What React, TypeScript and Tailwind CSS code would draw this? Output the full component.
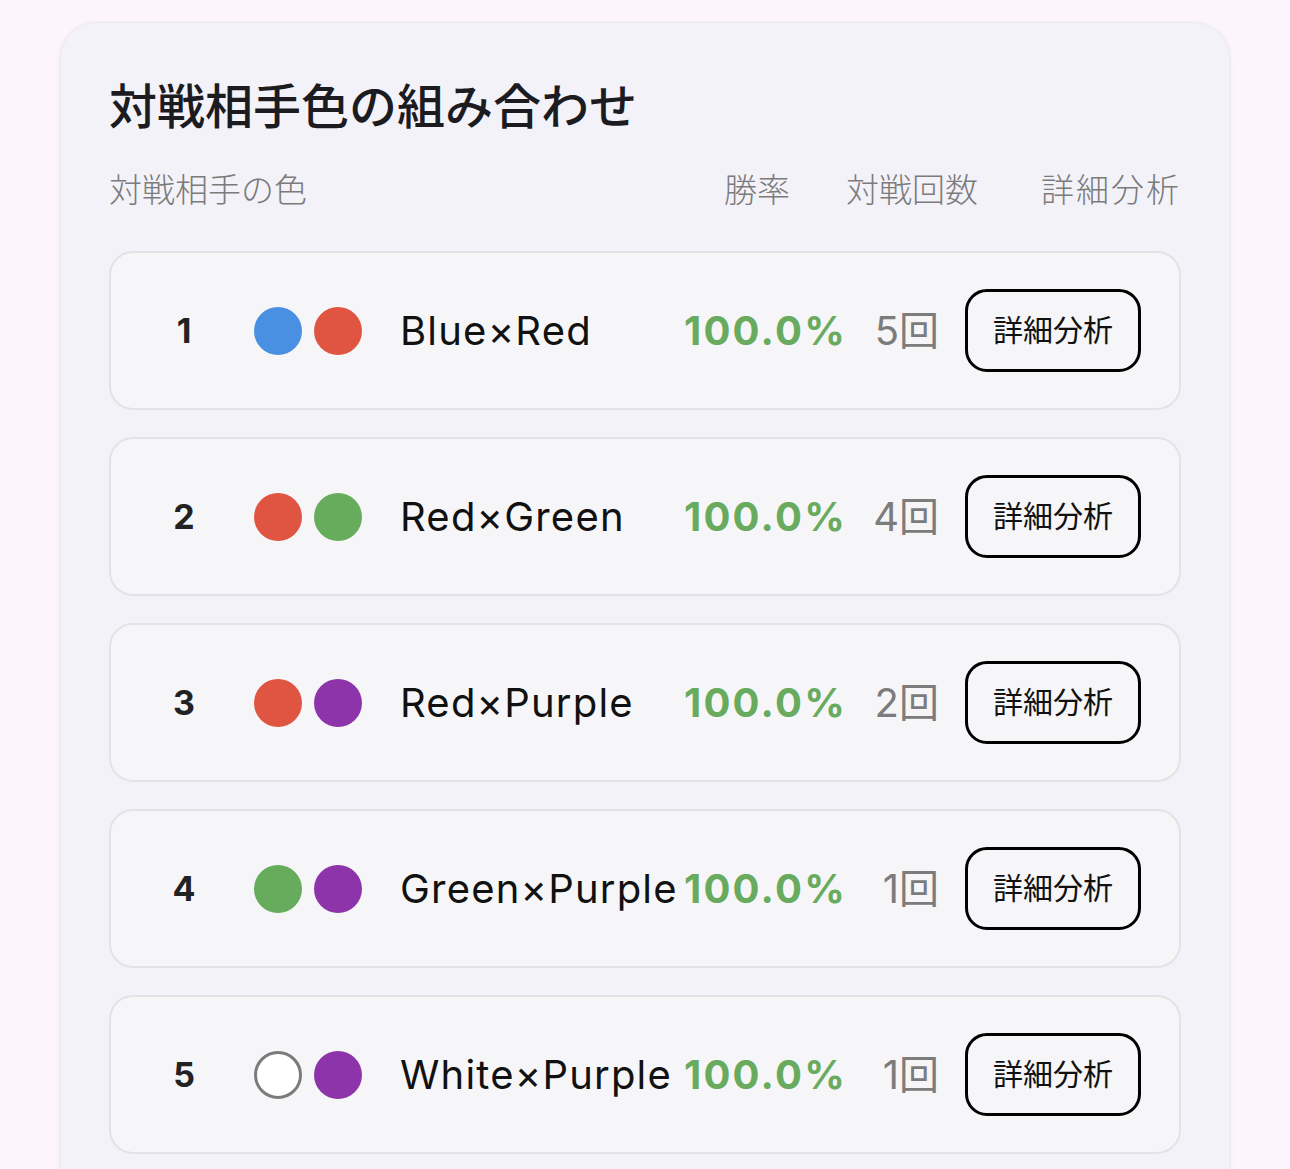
import React from 'react'

interface Matchup {
  rank: number
  colors: string[]
  name: string
  rate: string
  count: number
}

const DOT: Record<string, string> = {
  blue: 'bg-[#4a90e2]',
  red: 'bg-[#e05541]',
  green: 'bg-[#66ac5c]',
  purple: 'bg-[#8e34aa]',
  white: 'bg-white border-[3px] border-[#7b7b7b]',
}

const matchups: Matchup[] = [
  { rank: 1, colors: ['blue', 'red'], name: 'Blue×Red', rate: '100.0%', count: 5 },
  { rank: 2, colors: ['red', 'green'], name: 'Red×Green', rate: '100.0%', count: 4 },
  { rank: 3, colors: ['red', 'purple'], name: 'Red×Purple', rate: '100.0%', count: 2 },
  { rank: 4, colors: ['green', 'purple'], name: 'Green×Purple', rate: '100.0%', count: 1 },
  { rank: 5, colors: ['white', 'purple'], name: 'White×Purple', rate: '100.0%', count: 1 },
]

function Row({ m }: { m: Matchup }) {
  return (
    <div className="flex h-[159px] items-center rounded-[24px] border-2 border-[#e3e3e7] bg-[#f6f6f8] pl-[40px] pr-[38px]">
      <div className="w-[66px] text-center text-[34px] font-bold text-[#222]">{m.rank}</div>
      <div className="ml-[37px] flex gap-[12px]">
        {m.colors.map((c, i) => (
          <div key={i} className={`h-[48px] w-[48px] rounded-full ${DOT[c]}`} />
        ))}
      </div>
      <div className="ml-[38px] min-w-[280px] flex-1 whitespace-nowrap pr-[12px] text-[40px] tracking-[1.2px] text-[#111]">
        {m.name}
      </div>
      <div className="shrink-0 text-[40px] font-bold tracking-[2.2px] text-[#68ab5e]">{m.rate}</div>
      <div className="w-[92px] shrink-0 text-right text-[40px] text-[#7c7c7c]">{m.count}回</div>
      <button className="ml-[26px] flex h-[83px] w-[176px] shrink-0 items-center justify-center rounded-[22px] border-[3px] border-black text-[30px] text-[#111]">
        詳細分析
      </button>
    </div>
  )
}

export default function App() {
  return (
    <div
      className="min-h-screen bg-[#fcf5fb] px-[60px] pt-[22px]"
      style={{ fontFamily: 'Inter, "Noto Sans CJK JP", sans-serif' }}
    >
      <div className="h-[1200px] rounded-[36px] border border-[#ececf0] bg-[#f3f2f8] px-[48px] pt-[60px] shadow-[0_1px_4px_rgba(0,0,0,0.08)]">
        <h1 className="text-[48px] font-medium leading-none text-[#1c1b1f]">対戦相手色の組み合わせ</h1>
        <div className="mt-[43px] flex items-center text-[33px] font-light leading-none text-[#7b7b7b]">
          <div className="flex-1">対戦相手の色</div>
          <div className="w-[122px]">勝率</div>
          <div className="w-[195px]">対戦回数</div>
          <div className="tracking-[2px]">詳細分析</div>
        </div>
        <div className="mt-[44px] flex flex-col gap-[27px]">
          {matchups.map((m) => (
            <Row key={m.rank} m={m} />
          ))}
        </div>
      </div>
    </div>
  )
}
